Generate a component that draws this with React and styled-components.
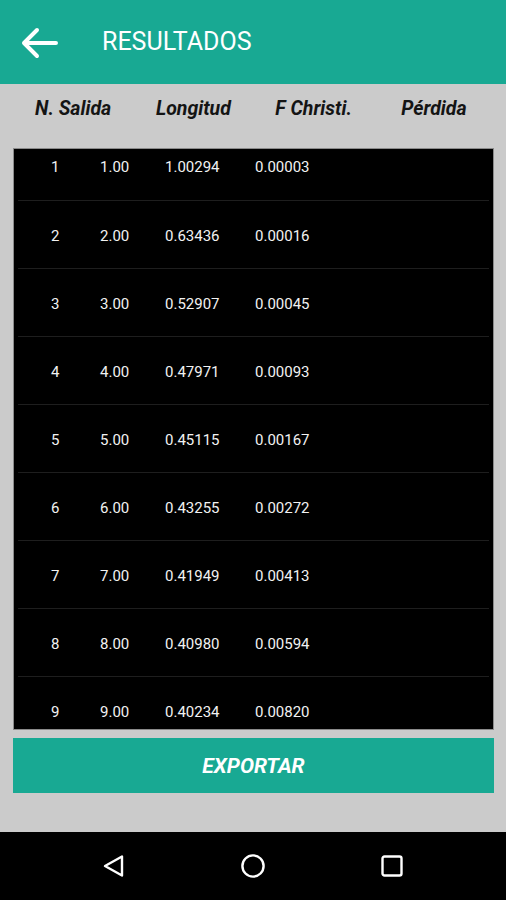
import React from "react";
import styled, { createGlobalStyle } from "styled-components";

const rows = [
  ["1", "1.00", "1.00294", "0.00003"],
  ["2", "2.00", "0.63436", "0.00016"],
  ["3", "3.00", "0.52907", "0.00045"],
  ["4", "4.00", "0.47971", "0.00093"],
  ["5", "5.00", "0.45115", "0.00167"],
  ["6", "6.00", "0.43255", "0.00272"],
  ["7", "7.00", "0.41949", "0.00413"],
  ["8", "8.00", "0.40980", "0.00594"],
  ["9", "9.00", "0.40234", "0.00820"],
];

const GlobalStyle = createGlobalStyle`
  html, body {
    margin: 0;
    padding: 0;
    background: #000;
  }
  body {
    font-family: Roboto, "Liberation Sans", sans-serif;
  }
`;

export default function App() {
  return (
    <>
      <GlobalStyle />
      <Screen>
        <AppBar>
          <BackButton aria-label="Volver">
            <svg width="38" height="32" viewBox="0 0 38 32" fill="none">
              <path
                d="M36 16H4M17 3L4 16l13 13"
                stroke="#fff"
                strokeWidth="4"
                strokeLinecap="round"
                strokeLinejoin="round"
              />
            </svg>
          </BackButton>
          <Title>RESULTADOS</Title>
        </AppBar>
        <Content>
          <HeaderRow>
            <HeaderCell>N. Salida</HeaderCell>
            <HeaderCell>Longitud</HeaderCell>
            <HeaderCell>F Christi.</HeaderCell>
            <HeaderCell>Pérdida</HeaderCell>
          </HeaderRow>
          <Table>
            {rows.map((r, i) => (
              <Row key={r[0]} $first={i === 0}>
                <Cell>{r[0]}</Cell>
                <Cell>{r[1]}</Cell>
                <Cell>{r[2]}</Cell>
                <Cell>{r[3]}</Cell>
              </Row>
            ))}
          </Table>
          <ExportButton>EXPORTAR</ExportButton>
        </Content>
        <NavBar>
          <NavIcon>
            <svg width="26" height="26" viewBox="0 0 26 26">
              <path
                d="M21 3.5v19L4 13z"
                fill="none"
                stroke="#fff"
                strokeWidth="2.4"
                strokeLinejoin="round"
              />
            </svg>
          </NavIcon>
          <NavIcon>
            <svg width="26" height="26" viewBox="0 0 26 26">
              <circle cx="13" cy="13" r="10.6" fill="none" stroke="#fff" strokeWidth="2.4" />
            </svg>
          </NavIcon>
          <NavIcon>
            <svg width="26" height="26" viewBox="0 0 26 26">
              <rect x="3.5" y="3.5" width="19" height="19" rx="2" fill="none" stroke="#fff" strokeWidth="2.4" />
            </svg>
          </NavIcon>
        </NavBar>
      </Screen>
    </>
  );
}

const Screen = styled.div`
  width: 506px;
  height: 900px;
  display: flex;
  flex-direction: column;
  background: #cbcbcb;
  overflow: hidden;
`;

const AppBar = styled.header`
  height: 84px;
  flex: none;
  display: flex;
  align-items: center;
  background: #18a993;
  padding-left: 20px;
  box-sizing: border-box;
`;

const BackButton = styled.div`
  width: 40px;
  height: 32px;
  display: flex;
  align-items: center;
  margin-top: 2px;
`;

const Title = styled.h1`
  margin: 0 0 0 42px;
  font-size: 25px;
  font-weight: 400;
  color: #fff;
  line-height: 30px;
`;

const Content = styled.main`
  flex: 1;
  display: flex;
  flex-direction: column;
  padding: 0 12px 0 13px;
`;

const HeaderRow = styled.div`
  display: grid;
  grid-template-columns: repeat(4, 1fr);
  height: 64px;
  align-items: center;
`;

const HeaderCell = styled.div`
  text-align: center;
  font-size: 19.5px;
  line-height: 24px;
  font-weight: 700;
  font-style: italic;
  color: #141414;
  margin-top: -14px;
`;

const Table = styled.div`
  height: 582px;
  flex: none;
  background: #000;
  border: 1px solid #8a8a8a;
  box-sizing: border-box;
  overflow: hidden;
`;

const Row = styled.div`
  display: grid;
  grid-template-columns: 49px 65px 90px 1fr;
  height: ${(p) => (p.$first ? "52px" : "68px")};
  padding: ${(p) => (p.$first ? "9px 0 0 33px" : "26px 0 0 33px")};
  margin: 0 4px;
  box-sizing: border-box;
  border-bottom: 1px solid #1e1e1e;

  &:last-child {
    border-bottom: none;
  }
`;

const Cell = styled.div`
  font-size: 15px;
  color: #f2f2f2;
  line-height: 18px;
`;

const ExportButton = styled.button`
  margin-top: 8px;
  height: 55px;
  border: none;
  padding: 0;
  background: #18a993;
  color: #fff;
  font-family: Roboto, "Liberation Sans", sans-serif;
  font-size: 21px;
  line-height: 26px;
  font-weight: 700;
  font-style: italic;
  cursor: pointer;
`;

const NavBar = styled.nav`
  height: 68px;
  flex: none;
  background: #000;
  display: flex;
  justify-content: space-around;
  align-items: center;
  padding: 0 44px;
`;

const NavIcon = styled.div`
  width: 26px;
  height: 26px;
  display: flex;
`;
